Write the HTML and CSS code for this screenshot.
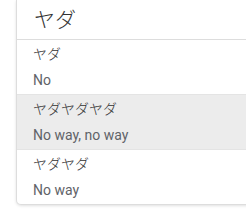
FILE: index.html
```html
<!DOCTYPE html>
<html lang="ja">
<head>
<meta charset="utf-8">
<link rel="stylesheet" href="styles.css">
</head>
<body>
<div class="frame">
  <div class="card">
    <div class="header">ヤダ</div>
    <div class="row">
      <div class="primary">ヤダ</div>
      <div class="secondary">No</div>
    </div>
    <div class="row active">
      <div class="primary">ヤダヤダヤダ</div>
      <div class="secondary">No way, no way</div>
    </div>
    <div class="row last">
      <div class="primary">ヤダヤダ</div>
      <div class="secondary">No way</div>
    </div>
  </div>
</div>
</body>
</html>
```
FILE: styles.css
```css
html, body {
  margin: 0;
  padding: 0;
  background: #ffffff;
}
body {
  font-family: Roboto, "Noto Sans CJK JP", sans-serif;
}
.frame {
  width: 246px;
  overflow: hidden;
  padding-bottom: 6px;
}
.card {
  margin-left: 16px;
  margin-right: -40px;
  border: 1px solid #dddddd;
  border-top: none;
  border-radius: 0 0 5px 5px;
  box-shadow: 0 1px 3px rgba(0,0,0,0.12);
  background: #fff;
}
.header {
  height: 39px;
  line-height: 36px;
  padding-left: 17px;
  font-size: 21px;
  color: #333;
  border-bottom: 1px solid #dddddd;
  font-family: "Noto Sans CJK JP", sans-serif;
  font-weight: 300;
}
.row {
  display: flex;
  flex-direction: column;
  gap: 7px;
  padding: 3px 16px 4px 16px;
  border-bottom: 1px solid #e4e4e4;
}
.row.last {
  border-bottom: none;
}
.row.active {
  background: #ececec;
}
.primary {
  font-family: "Noto Sans CJK JP", sans-serif;
  font-size: 14px;
  line-height: 20px;
  color: #333;
  font-weight: 300;
}
.secondary {
  font-size: 14px;
  line-height: 20px;
  color: #5f6368;
}
```
